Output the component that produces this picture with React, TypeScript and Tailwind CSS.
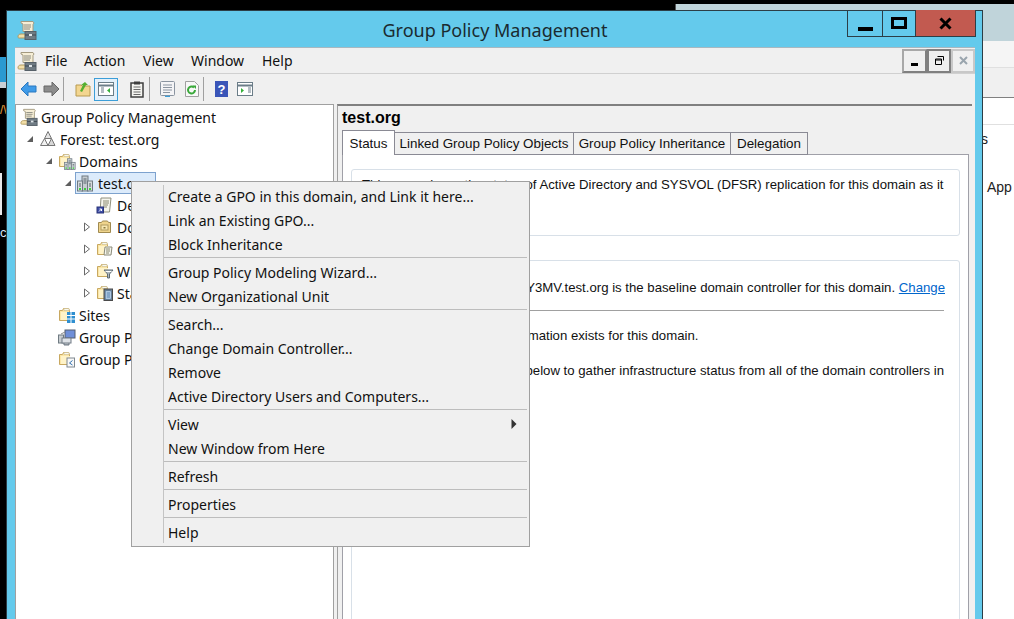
import React from "react";

const seg = "font-['Noto_Sans',sans-serif]";
const ari = "font-['Liberation_Sans',Arial,sans-serif]";

function Scroll({ size = 20 }: { size?: number }) {
  return (
    <svg width={size} height={size} viewBox="0 0 20 20" className="shrink-0">
      <path d="M4 1.500h12l1 1.500-1 1.500v7H6V4L4 3z" fill="#f6eed6" stroke="#a39a80" />
      <path d="M7 5h7M7 7h7M7 9h6" stroke="#8a8a80" />
      <path d="M1 17c0-2 1-3 3-3h5v4H3c-1 0-2 0-2-1z" fill="#f3dfa8" stroke="#b09a60" />
      <rect x="8" y="11.500" width="11" height="8" fill="#6f7b84" stroke="#566068" />
      <path d="M8 15h11" stroke="#3f4a52" />
      <rect x="12" y="14" width="3" height="2" fill="#dfe5e8" />
    </svg>
  );
}

function FolderBase({ children }: { children?: React.ReactNode }) {
  return (
    <svg width="18" height="18" viewBox="0 0 18 18" className="shrink-0">
      <path d="M1.500 4.500h3l1-2h5l1 2v10h-10z" fill="#fbe6a6" stroke="#c8a860" />
      <path d="M3 6h9v8H3z" fill="#fff3c8" />
      <path d="M6 2.500h5v2H6z" fill="#f8f8f0" stroke="#c0b080" strokeWidth="0.5" />
      {children}
    </svg>
  );
}

function Server({ x = 0, y = 0, s = 1 }: { x?: number; y?: number; s?: number }) {
  return (
    <g transform={`translate(${x} ${y}) scale(${s})`}>
      <rect x="5" y="1" width="6" height="15" fill="#c6ccd0" stroke="#6f7a82" />
      <rect x="0.500" y="6" width="5" height="10" fill="#d4d9dc" stroke="#6f7a82" />
      <rect x="10.500" y="6" width="5" height="10" fill="#d4d9dc" stroke="#6f7a82" />
      <path d="M6.500 4h3M6.500 6h3M6.500 8h3M2 9h2M12 9h2M2 11h2M12 11h2" stroke="#59646c" />
      <rect x="2" y="13" width="2" height="2" fill="#3fd03f" />
      <rect x="7" y="13" width="2" height="2" fill="#3fd03f" />
      <rect x="12" y="13" width="2" height="2" fill="#3fd03f" />
    </g>
  );
}

function TreeIcon({ kind }: { kind: string }) {
  if (kind === "gpm") return <Scroll size={18} />;
  if (kind === "forest")
    return (
      <svg width="18" height="18" viewBox="0 0 18 18" className="shrink-0">
        <path d="M9 1.500l3.500 7h-7z" fill="#e4e4e4" stroke="#777" />
        <path d="M5.500 8.500l3.500 7H1.500z" fill="#f2f2f2" stroke="#777" />
        <path d="M12.500 8.500l3.500 7H9z" fill="#d8d8d8" stroke="#777" />
      </svg>
    );
  if (kind === "domain")
    return (
      <svg width="18" height="18" viewBox="0 0 18 18" className="shrink-0">
        <Server y={1} />
      </svg>
    );
  if (kind === "domains")
    return (
      <FolderBase>
        <Server x={6} y={6} s={0.72} />
      </FolderBase>
    );
  if (kind === "gpo")
    return (
      <svg width="18" height="18" viewBox="0 0 18 18" className="shrink-0">
        <path d="M5 2h10l-1.500 14H4z" fill="#f5f5ec" stroke="#90907f" />
        <path d="M7 5h6M7 7h6M7 9h5M7 11h4" stroke="#8a8a70" />
        <rect x="1" y="11" width="6.500" height="6" fill="#3f4fa8" stroke="#2a3478" />
        <path d="M3 15.500l2.500-2.500M3.500 13h2v2" stroke="#fff" fill="none" />
      </svg>
    );
  if (kind === "ou")
    return (
      <svg width="18" height="18" viewBox="0 0 18 18" className="shrink-0">
        <path d="M2.500 4.500h3l1-1.500h5l1 1.500h2v10h-12z" fill="#efd48c" stroke="#a08a50" />
        <rect x="5" y="7" width="7" height="5" fill="#f8e8b0" stroke="#b09a60" />
        <rect x="7.500" y="9" width="2" height="1.500" fill="#8a7a40" />
      </svg>
    );
  if (kind === "gpos")
    return (
      <FolderBase>
        <path d="M9 7h7l-1 8H8z" fill="#f5f5ec" stroke="#8a8a7a" />
        <path d="M10 9h4M10 11h4M10 13h3" stroke="#8a8a70" />
      </FolderBase>
    );
  if (kind === "wmi")
    return (
      <FolderBase>
        <path d="M8 8h9l-3.500 4v4h-2v-4z" fill="#aeb8be" stroke="#5f6a72" />
        <path d="M9.500 9.500h6" stroke="#fff" />
      </FolderBase>
    );
  if (kind === "starter")
    return (
      <FolderBase>
        <rect x="8" y="5" width="8.500" height="11.500" fill="#6d7f92" stroke="#4a4a4a" />
        <rect x="9.500" y="7" width="5.500" height="8" fill="#cfe0f2" stroke="#4a78a8" strokeWidth="0.5" />
        <path d="M10.500 9h3.500M10.500 11h3.500M10.500 13h3.500" stroke="#3a6ca0" />
      </FolderBase>
    );
  if (kind === "sites")
    return (
      <FolderBase>
        <rect x="9" y="6" width="8" height="11" fill="#2f8fd0" />
        <path d="M9 9.500h8M9 13h8M13 6v11" stroke="#fff" />
      </FolderBase>
    );
  if (kind === "gpm2")
    return (
      <svg width="18" height="18" viewBox="0 0 18 18" className="shrink-0">
        <rect x="0.500" y="7" width="5" height="8" fill="#c8cdd0" stroke="#6f7a82" />
        <rect x="7" y="2" width="10" height="8" fill="#6f8fd8" stroke="#555f70" />
        <path d="M3 6l4-2" stroke="#8a8a8a" />
        <rect x="4" y="10" width="9" height="5" fill="#dfe3e8" stroke="#707a85" />
        <path d="M6 15v2h5v-2" fill="#a0a8b0" stroke="#707a85" />
      </svg>
    );
  return (
    <FolderBase>
      <rect x="9" y="8" width="7.500" height="9" fill="#f8f8f8" stroke="#7f8890" />
      <path d="M14.500 10.500l-3 2.500 3 2" stroke="#2f6fb0" fill="none" />
    </FolderBase>
  );
}

function Arrow({ open }: { open?: boolean }) {
  return open ? (
    <svg width="8" height="8" viewBox="0 0 8 8">
      <path d="M7 1v6H1z" fill="#5e5e5e" />
    </svg>
  ) : (
    <svg width="8" height="10" viewBox="0 0 8 10">
      <path d="M1.500 1l5 4-5 4z" fill="#fff" stroke="#6a6a6a" />
    </svg>
  );
}

const tree = [
  { level: 0, icon: "gpm", label: "Group Policy Management" },
  { level: 1, icon: "forest", label: "Forest: test.org", arrow: "open" },
  { level: 2, icon: "domains", label: "Domains", arrow: "open" },
  { level: 3, icon: "domain", label: "test.org", arrow: "open", selected: true },
  { level: 4, icon: "gpo", label: "Default Domain Policy" },
  { level: 4, icon: "ou", label: "Domain Controllers", arrow: "closed" },
  { level: 4, icon: "gpos", label: "Group Policy Objects", arrow: "closed" },
  { level: 4, icon: "wmi", label: "WMI Filters", arrow: "closed" },
  { level: 4, icon: "starter", label: "Starter GPOs", arrow: "closed" },
  { level: 2, icon: "sites", label: "Sites" },
  { level: 2, icon: "gpm2", label: "Group Policy Modeling" },
  { level: 2, icon: "results", label: "Group Policy Results" },
];

const indents: Record<number, string> = { 0: "pl-[4px]", 1: "pl-[4px]", 2: "pl-[23px]", 3: "pl-[42px]", 4: "pl-[61px]" };

const menu: (string | null)[] = [
  "Create a GPO in this domain, and Link it here...",
  "Link an Existing GPO...",
  "Block Inheritance",
  null,
  "Group Policy Modeling Wizard...",
  "New Organizational Unit",
  null,
  "Search...",
  "Change Domain Controller...",
  "Remove",
  "Active Directory Users and Computers...",
  null,
  "View",
  "New Window from Here",
  null,
  "Refresh",
  null,
  "Properties",
  null,
  "Help",
];

function ToolSep() {
  return <div className="h-[24px] w-px bg-[#a0a0a0]" />;
}

function Toolbar() {
  return (
    <div className="flex h-[30px] items-center bg-[#f0f0f0] pl-[5px]">
      <svg width="17" height="16" viewBox="0 0 17 16" className="mr-[6px]">
        <path d="M1 8l7-7v4h8v6H8v4z" fill="#3f9be8" stroke="#2a78c0" />
      </svg>
      <svg width="17" height="16" viewBox="0 0 17 16" className="mr-[3px]">
        <path d="M16 8L9 1v4H1v6h8v4z" fill="#8c8c8c" stroke="#666" />
      </svg>
      <ToolSep />
      <svg width="16" height="16" viewBox="0 0 16 16" className="ml-[11px] mr-[3px]">
        <path d="M1 4h5l1 1h8v10H1z" fill="#f3d690" stroke="#b89a50" />
        <path d="M5 10l3-6-2 0 4-3 3 3h-2L7 11z" fill="#56b030" />
      </svg>
      <div className="flex h-[23px] w-[24px] items-center justify-center border border-[#3c9ed8] bg-[#e4f0fa]">
        <svg width="16" height="14" viewBox="0 0 16 14">
          <rect x="0.500" y="0.500" width="15" height="13" fill="#fff" stroke="#6b7d88" />
          <path d="M1 3.500h14" stroke="#6b7d88" strokeWidth="2" />
          <path d="M3 6h3M3 8h3M3 10h3" stroke="#6b7d88" />
          <path d="M12 6v5l-3-2.500z" fill="#36b03a" />
        </svg>
      </div>
      <svg width="14" height="17" viewBox="0 0 14 17" className="ml-[12px] mr-[5px]">
        <rect x="1" y="2" width="12" height="14" fill="#f4f4f0" stroke="#3f3f3f" strokeWidth="1.500" />
        <rect x="4" y="0.500" width="6" height="3" fill="#3f3f3f" />
        <path d="M3.500 6h7M3.500 8.500h7M3.500 11h7M3.500 13.500h7" stroke="#6a6a6a" />
      </svg>
      <ToolSep />
      <svg width="15" height="16" viewBox="0 0 15 16" className="ml-[10px] mr-[10px]">
        <rect x="0.500" y="0.500" width="14" height="14" rx="1" fill="#f4f4f6" stroke="#8a94a0" />
        <path d="M3 4h9M3 6.500h9M3 9h9M3 11.500h7" stroke="#8a94a0" />
        <path d="M5 15.500h5" stroke="#3c9ed8" strokeWidth="1.500" />
      </svg>
      <svg width="14" height="16" viewBox="0 0 14 16" className="mr-[4px]">
        <path d="M0.500 0.500h9l4 4v11H0.500z" fill="#f8f8f8" stroke="#a0a0a0" />
        <path d="M10 9a3.500 3.500 0 1 1-1-2.500" fill="none" stroke="#3aa83a" strokeWidth="2" />
        <path d="M7.500 4.500h3.500v3.500z" fill="#3aa83a" />
      </svg>
      <ToolSep />
      <div className="ml-[11px] mr-[9px] flex h-[16px] w-[13px] items-center justify-center bg-[#3a55b8] text-[13px] font-bold leading-none text-white">
        <span className={ari}>?</span>
      </div>
      <svg width="16" height="14" viewBox="0 0 16 14">
        <rect x="0.500" y="0.500" width="15" height="13" fill="#fff" stroke="#6b7d88" />
        <path d="M1 3.500h14" stroke="#6b7d88" strokeWidth="2" />
        <path d="M11 6h3M11 8h3M11 10h3" stroke="#6b7d88" />
        <path d="M4 6v5l3-2.500z" fill="#36b03a" />
      </svg>
    </div>
  );
}

function TreePane() {
  return (
    <div className={`${seg} h-full w-[319px] shrink-0 border border-[#a0a0a0] bg-white pt-px text-[14px] text-[#111]`}>
      {tree.map((r) => (
        <div key={r.label + r.level} className={`flex h-[22px] items-center whitespace-nowrap ${indents[r.level]}`}>
          {r.level > 0 && <span className="flex w-[19px] shrink-0 items-center justify-center">{r.arrow && <Arrow open={r.arrow === "open"} />}</span>}
          {r.selected ? (
            <div className="-ml-[2px] flex h-[22px] w-[81px] items-center gap-[3px] border border-[#7da2ce] bg-[#dcebfb] pl-px">
              <TreeIcon kind={r.icon} />
              <span>{r.label}</span>
            </div>
          ) : (
            <div className="flex items-center gap-[3px]">
              <TreeIcon kind={r.icon} />
              <span>{r.label}</span>
            </div>
          )}
        </div>
      ))}
    </div>
  );
}

function DetailPane() {
  const tabs = ["Linked Group Policy Objects", "Group Policy Inheritance", "Delegation"];
  return (
    <div className={`${ari} ml-[3px] flex h-full w-[635px] flex-col border-l border-t-2 border-l-[#a0a0a0] border-t-[#808080] bg-[#f0f0f0] pl-[4px] text-[13.4px] text-[#111]`}>
      <div className="flex h-[24px] items-center text-[16px] font-bold leading-none text-black">test.org</div>
      <div className="relative z-10 flex h-[25px] items-end">
        <div className="flex h-[25px] w-[53px] items-start justify-center border border-b-0 border-[#8a8a94] bg-white pt-[3px]">Status</div>
        {tabs.map((t, i) => (
          <div
            key={t}
            className={`flex h-[23px] items-center justify-center border-y border-r border-[#8a8a94] bg-[#f0f0f0] pt-px ${i === 0 ? "w-[179px]" : i === 1 ? "w-[157px]" : "w-[77px]"}`}
          >
            {t}
          </div>
        ))}
      </div>
      <div className="-mt-px ml-0 mr-[3px] flex-1 border border-[#a0a0a8] bg-white px-[8px] pt-[14px] text-[13.2px]">
        <div className="h-[67px] w-[609px] whitespace-nowrap rounded-[3px] border border-[#d8e0e8] px-[10px] pt-[6px] leading-[18px]">
          This page shows the status of Active Directory and SYSVOL (DFSR) replication for this domain as it
          <br />
          relates to Group Policy.
        </div>
        <div className="mt-[24px] h-[400px] w-[609px] rounded-[3px] border border-[#d8e0e8] px-[10px] pt-[18px]">
          <div className="whitespace-nowrap pr-[4px] text-right leading-[18px]">
            WIN-9QK7T2L8Y3MV.test.org is the baseline domain controller for this domain.{" "}
            <span className="text-[#0066cc] underline">Change</span>
          </div>
          <div className="mt-[13px] w-[582px] border-t border-[#a0a0a0]" />
          <div className="mt-[16px] whitespace-nowrap leading-[18px]">No infrastructure status information exists for this domain.</div>
          <div className="mt-[17px] w-[582px] whitespace-nowrap text-right leading-[18px]">
            Click Detect Now below to gather infrastructure status from all of the domain controllers in
          </div>
        </div>
      </div>
    </div>
  );
}

function ContextMenu() {
  return (
    <div className={`${seg} absolute left-[131px] top-[181px] z-20 flex h-[366px] w-[399px] border border-[#a0a0a0] bg-[#f0f0f0] py-[3px] pl-[1px] pr-px text-[14px] text-[#111]`}>
      <div className="w-[31px] shrink-0 border-r border-[#c4c4c4]" />
      <div className="flex-1">
        {menu.map((m, i) =>
          m === null ? (
            <div key={i} className="h-[4px] pr-px">
              <div className="h-px bg-[#bdbdbd]" />
            </div>
          ) : (
            <div key={i} className="flex h-[24px] items-center justify-between whitespace-nowrap pb-[2px] pl-[4px] pr-[11px]">
              <span>{m}</span>
              {m === "View" && (
                <svg width="6" height="10" viewBox="0 0 6 10">
                  <path d="M0.500 0l5 5-5 5z" fill="#333" />
                </svg>
              )}
            </div>
          )
        )}
      </div>
    </div>
  );
}

export default function App() {
  return (
    <div className="relative h-[619px] w-[1014px] overflow-hidden bg-black">
      {/* other desktop items */}
      <div className="absolute left-0 top-[57px] h-[25px] w-[6px] bg-[#2a9ad0]" />
      <div className="absolute left-0 top-[82px] h-[6px] w-[6px] bg-[#c8d0d4]" />
      <div className={`${ari} absolute left-0 top-[103px] text-[12px] leading-[14px] text-[#e8a040]`}>/\</div>
      <div className="absolute left-0 top-[173px] h-[42px] w-[2px] bg-[#e8e8e8]" />
      <div className={`${ari} absolute left-0 top-[226px] text-[13px] leading-[14px] text-[#d8e8f8]`}>c</div>

      {/* window behind */}
      <div className={`${ari} absolute left-[675px] top-[4px] flex h-[615px] w-[339px] flex-col bg-white text-[14px] text-[#222]`}>
        <div className="h-[37px] border-l border-[#555] bg-[#c0d4da]" />
        <div className="h-[27px] border-b border-[#e0e0e0] bg-[#f5f5f5]" />
        <div className="h-[30px] border-b border-[#808080] bg-[#f0f0f0]" />
        <div className="h-[27px] border-b border-[#e0e0e0]" />
        <div className="h-[53px] pl-[306px] pt-[5px] leading-[18px]">s</div>
        <div className="pl-[312px] leading-[18px]">App</div>
      </div>

      {/* main window */}
      <div className="absolute left-[6px] top-[10px] flex h-[620px] w-[977px] flex-col border border-[#2c3e46] bg-[#64caec] pl-[8px] pr-[7px]">
        <div className="relative flex h-[36px] shrink-0 items-center">
          <div className="ml-[2px] mt-[1px]">
            <Scroll />
          </div>
          <div className={`${seg} absolute left-0 right-0 top-[7px] text-center text-[18px] leading-[24px] text-[#1a2a30]`}>Group Policy Management</div>
          <div className="absolute -right-[1px] top-[-1px] flex h-[27px] border border-t-0 border-[#2c3e46]">
            <div className="flex w-[35px] items-end justify-center border-r border-[#2c3e46] pb-[5px]">
              <div className="h-[4px] w-[15px] bg-black" />
            </div>
            <div className="flex w-[33px] items-center justify-center border-r border-[#2c3e46]">
              <div className="h-[12px] w-[16px] border-[3px] border-black" />
            </div>
            <div className="flex w-[59px] items-center justify-center bg-[#c25a50]">
              <svg width="13" height="13" viewBox="0 0 13 13">
                <path d="M1.500 1.500l10 10M11.500 1.500l-10 10" stroke="#000" strokeWidth="3" />
              </svg>
            </div>
          </div>
        </div>

        <div className="flex flex-1 flex-col bg-[#f0f0f0]">
          <div className={`${seg} flex h-[27px] shrink-0 items-center border-b border-t border-b-[#d0d0d0] border-t-[#a8b8c0] text-[14px] text-[#111]`}>
            <div className="ml-[2px] mr-[8px]">
              <Scroll />
            </div>
            <span className="w-[39px]">File</span>
            <span className="w-[59px]">Action</span>
            <span className="w-[48px]">View</span>
            <span className="w-[71px]">Window</span>
            <span>Help</span>
            <div className="ml-auto flex h-[24px]">
              <div className="flex w-[25px] items-end justify-center border-2 border-[#a8a8a8] border-b-[#808080] border-r-[#808080] bg-[#f0f0f0] pb-[5px]">
                <div className="h-[3px] w-[7px] bg-black" />
              </div>
              <div className="flex w-[24px] items-center justify-center border-2 border-[#808080] bg-[#f0f0f0]">
                <svg width="9" height="9" viewBox="0 0 9 9">
                  <path d="M2.500 0.500h6v4M0.500 3h6v5.500h-6z" fill="none" stroke="#000" />
                  <path d="M0.500 4h6" stroke="#000" />
                </svg>
              </div>
              <div className="flex w-[24px] items-center justify-center border-2 border-[#c8c8c8] bg-[#f0f0f0]">
                <svg width="9" height="9" viewBox="0 0 9 9">
                  <path d="M1 1l7 7M8 1L1 8" stroke="#9aa5ae" strokeWidth="2" />
                </svg>
              </div>
            </div>
          </div>
          <Toolbar />
          <div className="flex flex-1 overflow-hidden">
            <TreePane />
            <DetailPane />
          </div>
        </div>
      </div>

      <ContextMenu />
    </div>
  );
}
